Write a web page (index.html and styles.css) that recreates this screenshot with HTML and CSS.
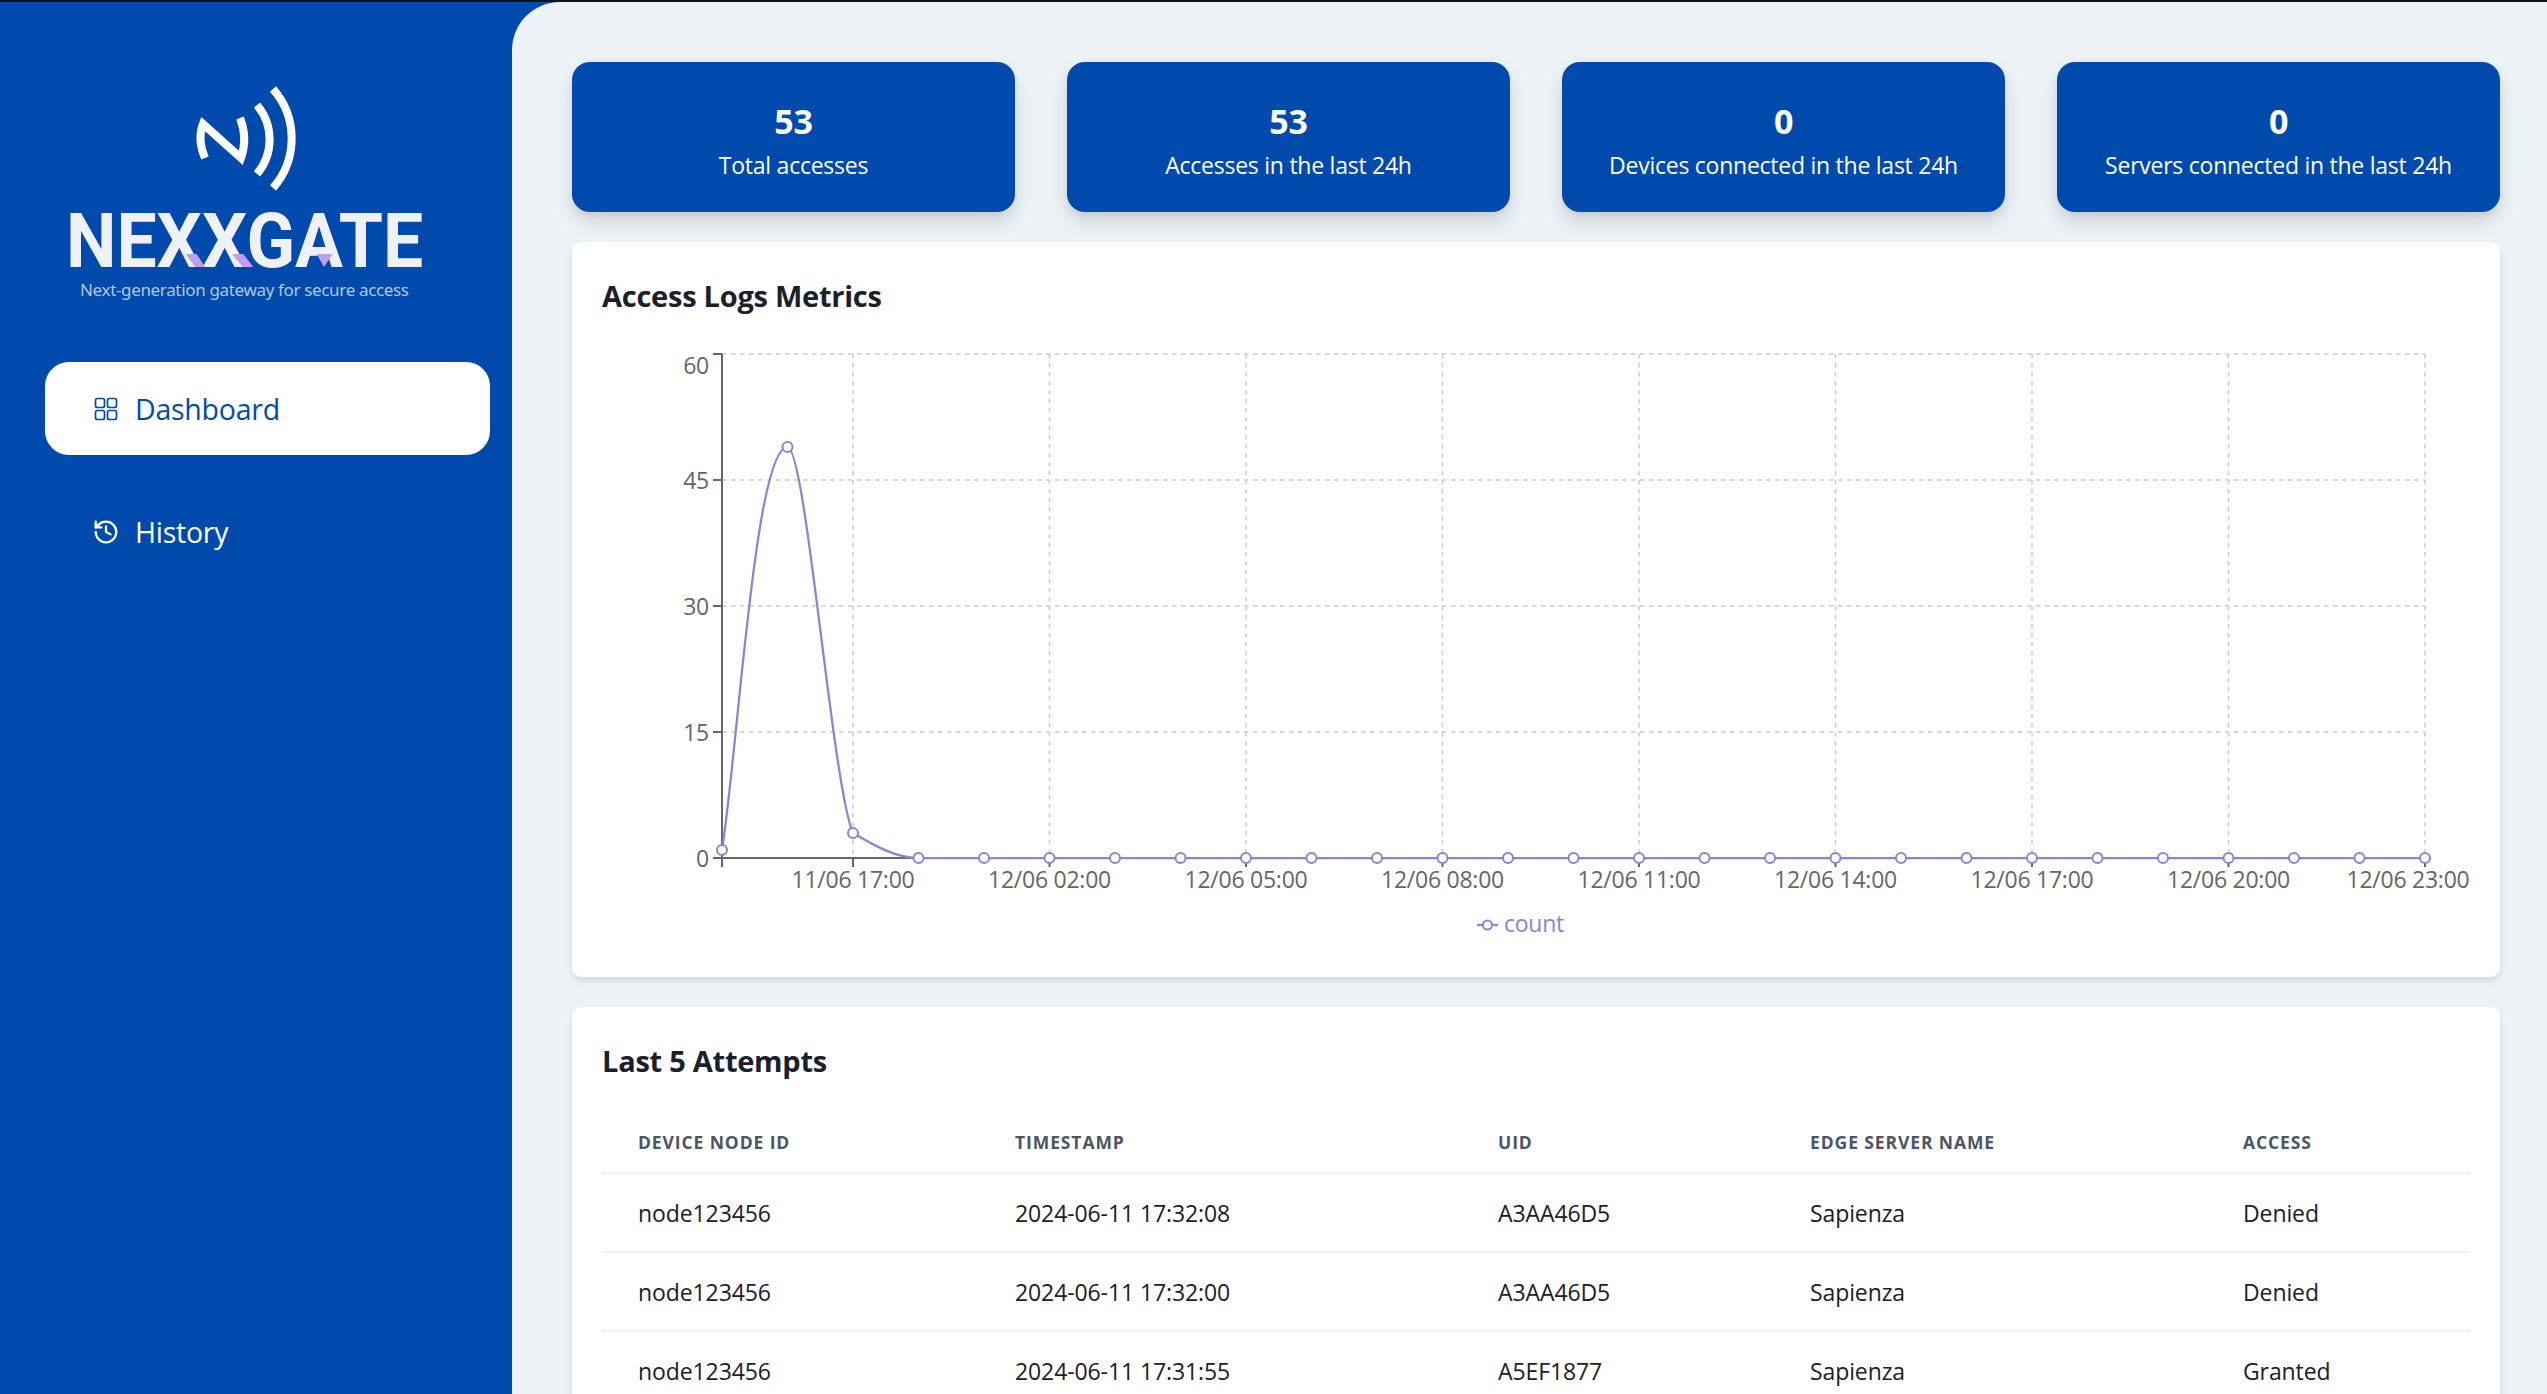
FILE: index.html
```html
<!DOCTYPE html>
<html lang="en">
<head>
  <meta charset="UTF-8">
  <meta name="viewport" content="width=device-width, initial-scale=1.0">
  <title>NexxGate Dashboard</title>
  <link rel="stylesheet" href="styles.css">
</head>
<body>

  <div class="topline"></div>

  <div class="layout">
    <aside class="sidebar">
      <svg class="logo" viewBox="0 0 400 240" width="400" height="240">
        <g class="logo-waves">
          <path d="M160 88 Q152 70 158 54 L196 88 Q203 68 195 48"/>
          <path d="M212 35 A53.5 53.5 0 0 1 212 104"/>
          <path d="M228 19 A75 75 0 0 1 228 118"/>
        </g>
        <text class="logo-name" transform="translate(21 197) scale(0.94 1)">NEXXGATE</text>
        <g class="logo-accent">
          <polygon points="140.7,184 151.7,184 160,197 150,197"/>
          <polygon points="187,184 198.3,184 208.3,197 197.7,197"/>
          <polygon points="271.7,184 287.7,184 279,197"/>
        </g>
        <text class="logo-tag" x="35" y="226" textLength="329" lengthAdjust="spacing">Next-generation gateway for secure access</text>
      </svg>

      <nav class="nav">
        <a class="nav-item active" href="#">
          <svg class="nav-icon nav-icon-thin" viewBox="0 0 24 24">
            <rect x="1.5" y="1.5" width="9" height="9" rx="2"/>
            <rect x="13.5" y="1.5" width="9" height="9" rx="2"/>
            <rect x="1.5" y="13.5" width="9" height="9" rx="2"/>
            <rect x="13.5" y="13.5" width="9" height="9" rx="2"/>
          </svg>
          Dashboard
        </a>
        <a class="nav-item" href="#">
          <svg class="nav-icon" viewBox="1.5 1.5 21 21">
            <path d="M3 12a9 9 0 1 0 9-9 9.75 9.75 0 0 0-6.74 2.74L3 8"/>
            <path d="M3 3v5h5"/>
            <path d="M12 7v5l4 2"/>
          </svg>
          History
        </a>
      </nav>
    </aside>

    <main class="main">
      <section class="stats">
        <div class="stat"><div class="stat-value">53</div><div class="stat-label">Total accesses</div></div>
        <div class="stat"><div class="stat-value">53</div><div class="stat-label">Accesses in the last 24h</div></div>
        <div class="stat"><div class="stat-value">0</div><div class="stat-label">Devices connected in the last 24h</div></div>
        <div class="stat"><div class="stat-value">0</div><div class="stat-label">Servers connected in the last 24h</div></div>
      </section>

      <section class="panel">
        <h2 class="panel-title">Access Logs Metrics</h2>
        <svg class="chart" viewBox="0 0 1868 607" width="1868" height="607">
          <!-- grid -->
          <g class="grid">
            <line x1="120" y1="14" x2="1823" y2="14"/>
            <line x1="120" y1="140" x2="1823" y2="140"/>
            <line x1="120" y1="266" x2="1823" y2="266"/>
            <line x1="120" y1="392" x2="1823" y2="392"/>
            <line x1="251" y1="14" x2="251" y2="518"/>
            <line x1="447.5" y1="14" x2="447.5" y2="518"/>
            <line x1="644" y1="14" x2="644" y2="518"/>
            <line x1="840.5" y1="14" x2="840.5" y2="518"/>
            <line x1="1037" y1="14" x2="1037" y2="518"/>
            <line x1="1233.5" y1="14" x2="1233.5" y2="518"/>
            <line x1="1430" y1="14" x2="1430" y2="518"/>
            <line x1="1626.5" y1="14" x2="1626.5" y2="518"/>
            <line x1="1823" y1="14" x2="1823" y2="518"/>
          </g>

          <!-- axes -->
          <g class="axis">
            <line x1="120" y1="14" x2="120" y2="518"/>
            <line x1="120" y1="518" x2="1823" y2="518"/>
            <line x1="111" y1="14" x2="120" y2="14"/>
            <line x1="111" y1="140" x2="120" y2="140"/>
            <line x1="111" y1="266" x2="120" y2="266"/>
            <line x1="111" y1="392" x2="120" y2="392"/>
            <line x1="111" y1="518" x2="120" y2="518"/>
            <line x1="120" y1="518" x2="120" y2="527"/>
            <line x1="251" y1="518" x2="251" y2="527"/>
            <line x1="447.5" y1="518" x2="447.5" y2="527"/>
            <line x1="644" y1="518" x2="644" y2="527"/>
            <line x1="840.5" y1="518" x2="840.5" y2="527"/>
            <line x1="1037" y1="518" x2="1037" y2="527"/>
            <line x1="1233.5" y1="518" x2="1233.5" y2="527"/>
            <line x1="1430" y1="518" x2="1430" y2="527"/>
            <line x1="1626.5" y1="518" x2="1626.5" y2="527"/>
            <line x1="1823" y1="518" x2="1823" y2="527"/>
          </g>

          <g class="tick tick-y">
            <text x="107" y="34">60</text>
            <text x="107" y="149">45</text>
            <text x="107" y="275">30</text>
            <text x="107" y="401">15</text>
            <text x="107" y="527">0</text>
          </g>
          <g class="tick tick-x">
            <text x="251" y="548">11/06 17:00</text>
            <text x="447.5" y="548">12/06 02:00</text>
            <text x="644" y="548">12/06 05:00</text>
            <text x="840.5" y="548">12/06 08:00</text>
            <text x="1037" y="548">12/06 11:00</text>
            <text x="1233.5" y="548">12/06 14:00</text>
            <text x="1430" y="548">12/06 17:00</text>
            <text x="1626.5" y="548">12/06 20:00</text>
            <text x="1806" y="548">12/06 23:00</text>
          </g>

          <!-- count series -->
          <path class="series" d="M120 510 C136 409 153 107 185.5 107 C204 107 230 445 251 493 C273 506 294 518 316.5 518 L1823 518"/>
          <g class="dots">
            <circle cx="120" cy="510" r="5"/><circle cx="185.5" cy="107" r="5"/><circle cx="251" cy="493" r="5"/>
            <circle cx="316.5" cy="518" r="5"/><circle cx="382" cy="518" r="5"/><circle cx="447.5" cy="518" r="5"/>
            <circle cx="513" cy="518" r="5"/><circle cx="578.5" cy="518" r="5"/><circle cx="644" cy="518" r="5"/>
            <circle cx="709.5" cy="518" r="5"/><circle cx="775" cy="518" r="5"/><circle cx="840.5" cy="518" r="5"/>
            <circle cx="906" cy="518" r="5"/><circle cx="971.5" cy="518" r="5"/><circle cx="1037" cy="518" r="5"/>
            <circle cx="1102.5" cy="518" r="5"/><circle cx="1168" cy="518" r="5"/><circle cx="1233.5" cy="518" r="5"/>
            <circle cx="1299" cy="518" r="5"/><circle cx="1364.5" cy="518" r="5"/><circle cx="1430" cy="518" r="5"/>
            <circle cx="1495.5" cy="518" r="5"/><circle cx="1561" cy="518" r="5"/><circle cx="1626.5" cy="518" r="5"/>
            <circle cx="1692" cy="518" r="5"/><circle cx="1757.5" cy="518" r="5"/><circle cx="1823" cy="518" r="5"/>
          </g>

          <!-- legend -->
          <line class="series" x1="875" y1="585" x2="896" y2="585"/>
          <circle class="legend-dot" cx="885.5" cy="585" r="4.5"/>
          <text class="legend-text" x="902" y="592">count</text>
        </svg>
      </section>

      <section class="panel">
        <h2 class="panel-title">Last 5 Attempts</h2>
        <table class="attempts">
          <colgroup>
            <col class="col-node">
            <col class="col-time">
            <col class="col-uid">
            <col class="col-server">
            <col class="col-access">
          </colgroup>
          <thead>
            <tr>
              <th>Device Node ID</th>
              <th>Timestamp</th>
              <th>UID</th>
              <th>Edge Server Name</th>
              <th>Access</th>
            </tr>
          </thead>
          <tbody>
            <tr>
              <td>node123456</td>
              <td>2024-06-11 17:32:08</td>
              <td>A3AA46D5</td>
              <td>Sapienza</td>
              <td>Denied</td>
            </tr>
            <tr>
              <td>node123456</td>
              <td>2024-06-11 17:32:00</td>
              <td>A3AA46D5</td>
              <td>Sapienza</td>
              <td>Denied</td>
            </tr>
            <tr>
              <td>node123456</td>
              <td>2024-06-11 17:31:55</td>
              <td>A5EF1877</td>
              <td>Sapienza</td>
              <td>Granted</td>
            </tr>
          </tbody>
        </table>
      </section>
    </main>
  </div>

</body>
</html>
```

FILE: styles.css
```css
html, body {
  height: 100%;
}

body {
  margin: 0;
  overflow: hidden;
  background: #004aad;
  color: #1a202c;
  font-family: 'Open Sans', 'Liberation Sans', sans-serif;
  font-size: 23px;
  letter-spacing: -0.25px;
}

.topline {
  height: 2px;
  background: #111318;
}

.layout {
  display: flex;
  height: calc(100% - 2px);
}

/* sidebar */
.sidebar {
  flex: 0 0 512px;
  box-sizing: border-box;
  padding: 68px 22px 0 45px;
}

.logo {
  display: block;
}

.logo-waves path {
  fill: none;
  stroke: #fff;
  stroke-width: 8;
}

.logo-name {
  font-family: 'Roboto', sans-serif;
  font-size: 76px;
  font-weight: 700;
  letter-spacing: 0;
  fill: #f0f0f7;
}

.logo-accent polygon {
  fill: #bd9fee;
}

.logo-tag {
  font-family: 'Noto Sans', sans-serif;
  font-size: 17px;
  letter-spacing: 0;
  fill: rgba(255, 255, 255, 0.7);
}

.nav {
  display: flex;
  flex-direction: column;
  gap: 30px;
  margin-top: 52px;
}

.nav-item {
  display: flex;
  align-items: center;
  gap: 17px;
  height: 93px;
  padding-left: 49px;
  border-radius: 24px;
  color: #fff;
  font-size: 28.5px;
  text-decoration: none;
}

.nav-item.active {
  background: #fff;
  color: #004aad;
}

.nav-icon {
  width: 24px;
  height: 24px;
  fill: none;
  stroke: currentColor;
  stroke-width: 2;
  stroke-linecap: round;
  stroke-linejoin: round;
}

.nav-icon-thin {
  stroke-width: 1.7;
}

/* main area */
.main {
  flex: 1;
  box-sizing: border-box;
  padding: 60px 47px 0 60px;
  background: #edf2f7;
  border-top-left-radius: 48px;
  overflow: hidden;
}

.stats {
  display: grid;
  grid-template-columns: repeat(4, 1fr);
  gap: 52px;
  margin-bottom: 30px;
}

.stat {
  padding: 32px 0 29px;
  border-radius: 18px;
  background: #004aad;
  color: #fff;
  text-align: center;
  box-shadow: 0 10px 20px rgba(0, 0, 0, 0.12), 0 4px 6px rgba(0, 0, 0, 0.05);
}

.stat-value {
  font-size: 34px;
  font-weight: 700;
  line-height: 54px;
}

.stat-label {
  line-height: 35px;
}

.panel {
  margin-bottom: 30px;
  padding: 30px;
  border-radius: 9px;
  background: #fff;
  box-shadow: 0 4px 6px rgba(0, 0, 0, 0.1);
}

.panel-title {
  margin: 0;
  font-size: 29px;
  font-weight: 700;
  line-height: 47px;
}

/* chart */
.chart {
  display: block;
  margin-top: 21px;
}

.grid line {
  stroke: #ccc;
  stroke-width: 1.5;
  stroke-dasharray: 4.5 4.5;
}

.axis line {
  stroke: #666;
  stroke-width: 2;
}

.tick text {
  fill: #666;
  font-size: 23px;
}

.tick-y text {
  text-anchor: end;
}

.tick-x text {
  text-anchor: middle;
}

.series {
  fill: none;
  stroke: #8884d8;
  stroke-width: 2.25;
}

.dots circle,
.legend-dot {
  fill: #fff;
  stroke: #8884d8;
  stroke-width: 2;
}

.legend-text {
  fill: #8884d8;
  font-size: 23px;
}

/* table */
.attempts {
  width: 100%;
  margin-top: 28px;
  border-collapse: collapse;
  table-layout: fixed;
}

.col-node { width: 377px; }
.col-time { width: 483px; }
.col-uid { width: 312px; }
.col-server { width: 433px; }
.col-access { width: 263px; }

.attempts th {
  height: 60px;
  padding: 0 0 0 36px;
  border-bottom: 2px solid #edf2f7;
  color: #4a5568;
  font-size: 17.5px;
  font-weight: 700;
  letter-spacing: 0.9px;
  text-align: left;
  text-transform: uppercase;
}

.attempts td {
  height: 77px;
  padding: 0 0 0 36px;
  border-bottom: 2px solid #edf2f7;
  letter-spacing: -0.1px;
}
```
